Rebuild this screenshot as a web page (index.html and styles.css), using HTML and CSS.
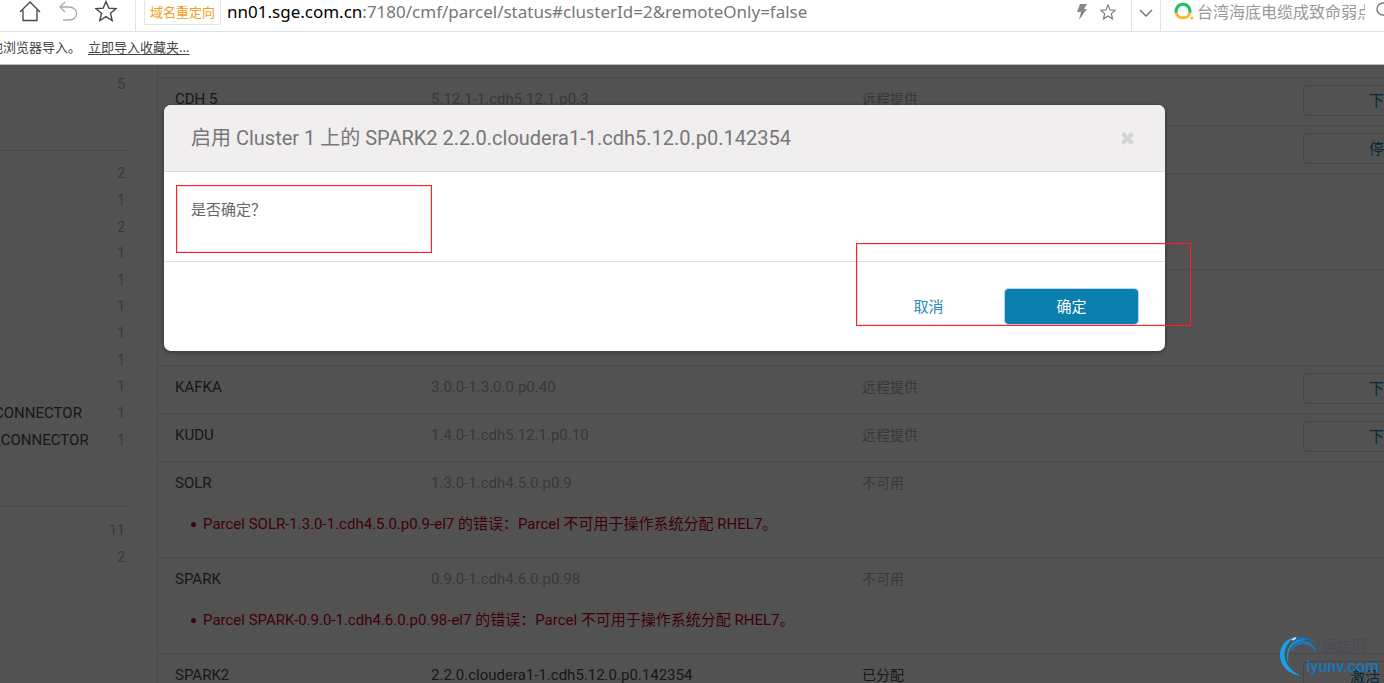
FILE: index.html
```html
<!DOCTYPE html>
<html lang="zh-CN">
<head>
  <meta charset="UTF-8" />
  <meta name="viewport" content="width=device-width, initial-scale=1.0"/>
  <title>Parcel</title>
  <link rel="stylesheet" href="styles.css">
</head>
<body>
  <!-- Browser bars -->
  <header class="browser">
    <div class="toolbar">
      <div class="nav-buttons">
        <button type="button" class="icon-btn" aria-label="主页">
          <svg width="22" height="22" viewBox="0 0 22 22" fill="none" stroke="#444" stroke-width="1.3"><path d="M1 12 L11 2 L21 12 M4 10 V20.500 H18 V10"/></svg>
        </button>
        <button type="button" class="icon-btn" aria-label="撤销">
          <svg width="22" height="22" viewBox="0 0 22 22" fill="none" stroke="#aaa" stroke-width="1.3"><path d="M8 2 L3 7 L8 12 M3 7 H12 C22 7 22 20 12 20 H6"/></svg>
        </button>
        <button type="button" class="icon-btn" aria-label="收藏">
          <svg width="22" height="22" viewBox="0 0 22 22" fill="none" stroke="#444" stroke-width="1.4"><path d="M11 1.500 L13.800 8.200 L21 8.700 L15.500 13.300 L17.200 20.500 L11 16.600 L4.800 20.500 L6.500 13.300 L1 8.700 L8.200 8.200 Z"/></svg>
        </button>
      </div>
      <div class="address">
        <span class="redirect-tag">域名重定向</span>
        <span class="url"><b>nn01.sge.com.cn</b>:7180/cmf/parcel/status#clusterId=2&amp;remoteOnly=false</span>
      </div>
      <div class="address-tools">
        <button type="button" class="icon-btn" aria-label="加速">
          <svg width="12" height="16" viewBox="0 0 12 16"><path fill="#888" d="M4 0 H11 L8 5 H11 L3 16 L5 8 H1 Z"/></svg>
        </button>
        <button type="button" class="icon-btn" aria-label="加入收藏">
          <svg width="16" height="16" viewBox="0 0 22 22" fill="none" stroke="#888" stroke-width="1.8"><path d="M11 1.500 L13.800 8.200 L21 8.700 L15.500 13.300 L17.200 20.500 L11 16.600 L4.800 20.500 L6.500 13.300 L1 8.700 L8.200 8.200 Z"/></svg>
        </button>
      </div>
      <button type="button" class="icon-btn dropdown" aria-label="展开">
        <svg width="14" height="8" viewBox="0 0 14 8" fill="none" stroke="#777" stroke-width="1.5"><path d="M1 1 L7 7 L13 1"/></svg>
      </button>
      <div class="search">
        <svg width="20" height="18" viewBox="0 0 20 18" fill="none" stroke-width="3"><path stroke="#1fbf63" d="M2.200 11 A7 7 0 1 1 15.800 11"/><path stroke="#fbb62b" d="M2.200 10.500 A7 7 0 0 0 15.800 10.500"/><circle cx="17.800" cy="16" r="1.500" fill="#fbb62b"/></svg>
        <input type="text" aria-label="搜索" placeholder="台湾海底电缆成致命弱点" />
        <svg class="search-icon" width="18" height="18" viewBox="0 0 18 18" fill="none" stroke="#777" stroke-width="1.4"><circle cx="7" cy="7" r="6"/><path d="M11.500 11.500 L17 17"/></svg>
      </div>
    </div>
    <div class="bookmarks">
      <span>地浏览器导入。</span>
      <a href="#">立即导入收藏夹...</a>
    </div>
  </header>

  <!-- Parcel page -->
  <div class="page">
    <aside class="sidebar">
      <ul class="filter-list">
        <li><span class="count">5</span></li>
      </ul>
      <ul class="filter-list parcels">
        <li><span class="count">2</span></li>
        <li><span class="count">1</span></li>
        <li><span class="count">2</span></li>
        <li><span class="count">1</span></li>
        <li><span class="count">1</span></li>
        <li><span class="count">1</span></li>
        <li><span class="count">1</span></li>
        <li><span class="count">1</span></li>
        <li><span class="count">1</span></li>
        <li><span>CONNECTOR</span><span class="count">1</span></li>
        <li><span>_CONNECTOR</span><span class="count">1</span></li>
      </ul>
      <ul class="filter-list">
        <li><span class="count">11</span></li>
        <li><span class="count">2</span></li>
      </ul>
    </aside>

    <main class="content">
      <table class="parcel-table">
        <colgroup>
          <col class="col-name"><col class="col-version"><col><col class="col-action">
        </colgroup>
        <tbody>
          <tr><td>CDH 5</td><td class="muted">5.12.1-1.cdh5.12.1.p0.3</td><td class="status muted">远程提供</td><td class="action"><button type="button" class="btn">下载</button></td></tr>
          <tr><td></td><td></td><td></td><td class="action"><button type="button" class="btn">停用</button></td></tr>
          <tr class="tall"><td></td><td></td><td></td><td></td></tr>
          <tr class="tall"><td></td><td></td><td></td><td></td></tr>
          <tr><td>KAFKA</td><td class="muted">3.0.0-1.3.0.0.p0.40</td><td class="status muted">远程提供</td><td class="action"><button type="button" class="btn">下载</button></td></tr>
          <tr><td>KUDU</td><td class="muted">1.4.0-1.cdh5.12.1.p0.10</td><td class="status muted">远程提供</td><td class="action"><button type="button" class="btn">下载</button></td></tr>
          <tr><td>SOLR</td><td class="muted">1.3.0-1.cdh4.5.0.p0.9</td><td class="status muted">不可用</td><td></td></tr>
          <tr class="error"><td colspan="4"><ul><li>Parcel SOLR-1.3.0-1.cdh4.5.0.p0.9-el7 的错误：Parcel 不可用于操作系统分配 RHEL7。</li></ul></td></tr>
          <tr><td>SPARK</td><td class="muted">0.9.0-1.cdh4.6.0.p0.98</td><td class="status muted">不可用</td><td></td></tr>
          <tr class="error"><td colspan="4"><ul><li>Parcel SPARK-0.9.0-1.cdh4.6.0.p0.98-el7 的错误：Parcel 不可用于操作系统分配 RHEL7。</li></ul></td></tr>
          <tr><td>SPARK2</td><td>2.2.0.cloudera1-1.cdh5.12.0.p0.142354</td><td class="status">已分配</td><td class="action"><button type="button" class="btn btn-split">激活</button></td></tr>
        </tbody>
      </table>
    </main>

    <!-- Confirm dialog -->
    <div class="backdrop">
      <div class="modal" role="dialog" aria-labelledby="modal-title">
        <div class="modal-header">
          <h3 id="modal-title">启用 Cluster 1 上的 SPARK2 2.2.0.cloudera1-1.cdh5.12.0.p0.142354</h3>
          <button type="button" class="icon-btn" aria-label="关闭">
            <svg width="13" height="13" viewBox="0 0 13 13" stroke="#d4d3d3" stroke-width="4"><path d="M1.500 1.500 L11.500 11.500 M11.500 1.500 L1.500 11.500"/></svg>
          </button>
        </div>
        <div class="modal-body">是否确定？</div>
        <div class="modal-footer">
          <button type="button" class="modal-btn">取消</button>
          <button type="button" class="modal-btn primary">确定</button>
        </div>
      </div>
      <div class="mark mark-question"></div>
      <div class="mark mark-buttons"></div>
    </div>

    <div class="watermark">
      <svg width="38" height="42" viewBox="0 0 38 42" fill="none">
        <path fill="#18a0ec" d="M21 41 C-6 37 -7 5 18 1 C1 8 -2 30 21 41 Z"/>
        <path fill="#1593e0" d="M9 30 C2 14 14 0 29 5 C14 4 5 15 9 30 Z"/>
        <path fill="#1978be" d="M11 17 C14 3 33 0 37 20 C31 6 18 6 11 17 Z"/>
        <path fill="#1b6da8" d="M16 3 C25 0 33 4 36 9 C30 5 24 3 16 5 Z"/>
        <path stroke="#d8f2ff" stroke-width="1.500" d="M12 5 L16 3"/>
      </svg>
      <span class="watermark-name">运维网</span>
      <span class="watermark-site">iyunv.com</span>
    </div>
  </div>
</body>
</html>
```
FILE: styles.css
```css
:root {
  --text: #4a4a4a;
  --muted: #b0b0b0;
  --line: #e4e4e4;
  --blue: #0b7fad;
  --red: #c80020;
}

* {
  box-sizing: border-box;
}

html, body {
  height: 100%;
  margin: 0;
}

body {
  display: flex;
  flex-direction: column;
  overflow: hidden;
  font-family: Roboto, "Noto Sans CJK SC", sans-serif;
  font-size: 15px;
  line-height: 20px;
  color: var(--text);
  background: #fff;
}

button, input {
  font: inherit;
}

ul {
  list-style: none;
  margin: 0;
  padding: 0;
}

svg {
  display: block;
  flex: none;
}

.icon-btn {
  display: flex;
  padding: 0;
  border: none;
  background: none;
  cursor: pointer;
}

/* Browser bars */
.browser {
  flex: none;
  font-family: "Noto Sans", "Noto Sans CJK SC", sans-serif;
  border-bottom: 1px solid #bbb;
}

.toolbar {
  display: flex;
  height: 32px;
  border-bottom: 1px solid #dfe2e4;
}

.nav-buttons {
  display: flex;
  gap: 16px;
  width: 136px;
  padding-left: 19px;
  border-right: 1px solid #dfe2e4;
}

.address {
  display: flex;
  flex: 1;
  align-items: flex-start;
  gap: 6px;
  min-width: 0;
  padding-left: 8px;
}

.redirect-tag {
  height: 25px;
  padding: 2px 5px;
  border: 1px solid #e6e6e6;
  border-top: none;
  font-size: 13px;
  color: #f0a020;
  white-space: nowrap;
}

.url {
  line-height: 24px;
  font-size: 17px;
  color: #777;
  white-space: nowrap;
}

.url b {
  font-weight: 400;
  color: #000;
}

.address-tools {
  display: flex;
  gap: 12px;
  padding: 4px 15px 0 0;
}

.dropdown {
  width: 30px;
  padding: 9px 0 0 7px;
  border: solid #dfe2e4;
  border-width: 0 1px;
}

.search {
  display: flex;
  gap: 3px;
  width: 223px;
  padding: 2px 0 0 13px;
  overflow: hidden;
}

.search input {
  width: 168px;
  height: 20px;
  padding: 0;
  border: none;
  outline: none;
  font-size: 16px;
}

.search input::placeholder {
  color: #999;
}

.search-icon {
  margin-left: 8px;
}

.bookmarks {
  display: flex;
  gap: 7px;
  height: 32px;
  padding-top: 5px;
  margin-left: -10px;
  font-size: 13px;
  color: #444;
}

.bookmarks a {
  color: #444;
  text-underline-offset: 2px;
}

/* Parcel page */
.page {
  display: flex;
  flex: 1;
  min-height: 0;
  position: relative;
  overflow: hidden;
}

.sidebar {
  width: 158px;
  padding: 5px 29px 0 0;
  border-right: 1px solid var(--line);
}

.filter-list {
  display: grid;
  grid-auto-rows: 27px;
  align-items: center;
  padding-bottom: 53px;
}

.filter-list + .filter-list {
  padding-top: 9px;
  border-top: 1px solid var(--line);
}

.filter-list.parcels {
  grid-auto-rows: 1fr;
  height: 356px;
}

.filter-list li {
  display: flex;
  margin-left: -6px;
  padding-right: 3px;
}

.count {
  margin-left: auto;
  font-size: 14px;
  color: var(--muted);
}

.content {
  flex: 1;
  min-width: 0;
  padding-top: 12px;
}

.parcel-table {
  width: calc(100% + 88px);
  table-layout: fixed;
  border-spacing: 0;
}

.col-name {
  width: 273px;
}

.col-version {
  width: 431px;
}

.col-action {
  width: 169px;
}

.parcel-table td {
  height: 48px;
  padding: 11px 0 16px;
  border-top: 1px solid var(--line);
  vertical-align: top;
}

.parcel-table td:first-child {
  padding-left: 17px;
}

.parcel-table .muted {
  color: var(--muted);
}

.parcel-table .status {
  font-size: 14px;
}

.parcel-table .tall td {
  height: 96px;
}

.parcel-table .action {
  padding: 7px 0 9px;
}

.parcel-table .error td {
  padding: 5px 0 23px 45px;
  border-top: none;
  color: var(--red);
}

.error li::before {
  content: "";
  float: left;
  width: 5px;
  height: 5px;
  margin: 8px 0 0 -12px;
  border-radius: 50%;
  background: var(--red);
}

.btn {
  display: block;
  width: 162px;
  height: 31px;
  padding: 0;
  border: 1px solid #d2d2d2;
  border-radius: 4px;
  background: #fff;
  color: var(--blue);
}

.btn-split {
  padding-right: 38px;
}

/* Confirm dialog */
.backdrop {
  position: absolute;
  inset: 0;
  padding: 40px 219px 0 164px;
  background: rgba(0, 0, 0, 0.68);
}

.modal {
  overflow: hidden;
  border-radius: 7px;
  background: #fff;
  box-shadow: 0 1px 4px rgba(0, 0, 0, 0.4);
}

.modal-header {
  display: flex;
  align-items: center;
  justify-content: space-between;
  padding: 19px 31px 19px 27px;
  border-bottom: 1px solid #dedede;
  background: #f0eeef;
}

.modal-header h3 {
  margin: 0;
  font-size: 20px;
  line-height: 28px;
  font-weight: 400;
  color: #777;
}

.modal-body {
  padding: 28px 27px 41px;
  color: #666;
}

.modal-footer {
  display: flex;
  justify-content: flex-end;
  gap: 8px;
  padding: 26px;
  border-top: 1px solid #dedede;
}

.modal-btn {
  width: 135px;
  height: 37px;
  border: 1px solid transparent;
  border-radius: 4px;
  background: none;
  color: #2a8db5;
  cursor: pointer;
}

.modal-btn.primary {
  border-color: #b9d7f5;
  background: var(--blue);
  background-clip: padding-box;
  color: #fff;
}

/* Red boxes drawn over the dialog */
.mark {
  position: absolute;
  border: 1px solid #f22;
  box-shadow: inset 0 0 0 1px rgba(255, 0, 0, 0.15);
  pointer-events: none;
}

.mark-question {
  top: 120px;
  left: 176px;
  width: 256px;
  height: 68px;
}

.mark-buttons {
  top: 178px;
  right: 193px;
  width: 335px;
  height: 83px;
}

.watermark {
  position: absolute;
  right: 4px;
  bottom: 4px;
  width: 100px;
  height: 44px;
}

.watermark-name {
  position: absolute;
  top: 1px;
  right: 13px;
  font-size: 15px;
  color: #4a4a56;
}

.watermark-site {
  position: absolute;
  right: 1px;
  bottom: 2px;
  font-size: 16px;
  font-weight: 500;
  color: #1677bd;
}
```
